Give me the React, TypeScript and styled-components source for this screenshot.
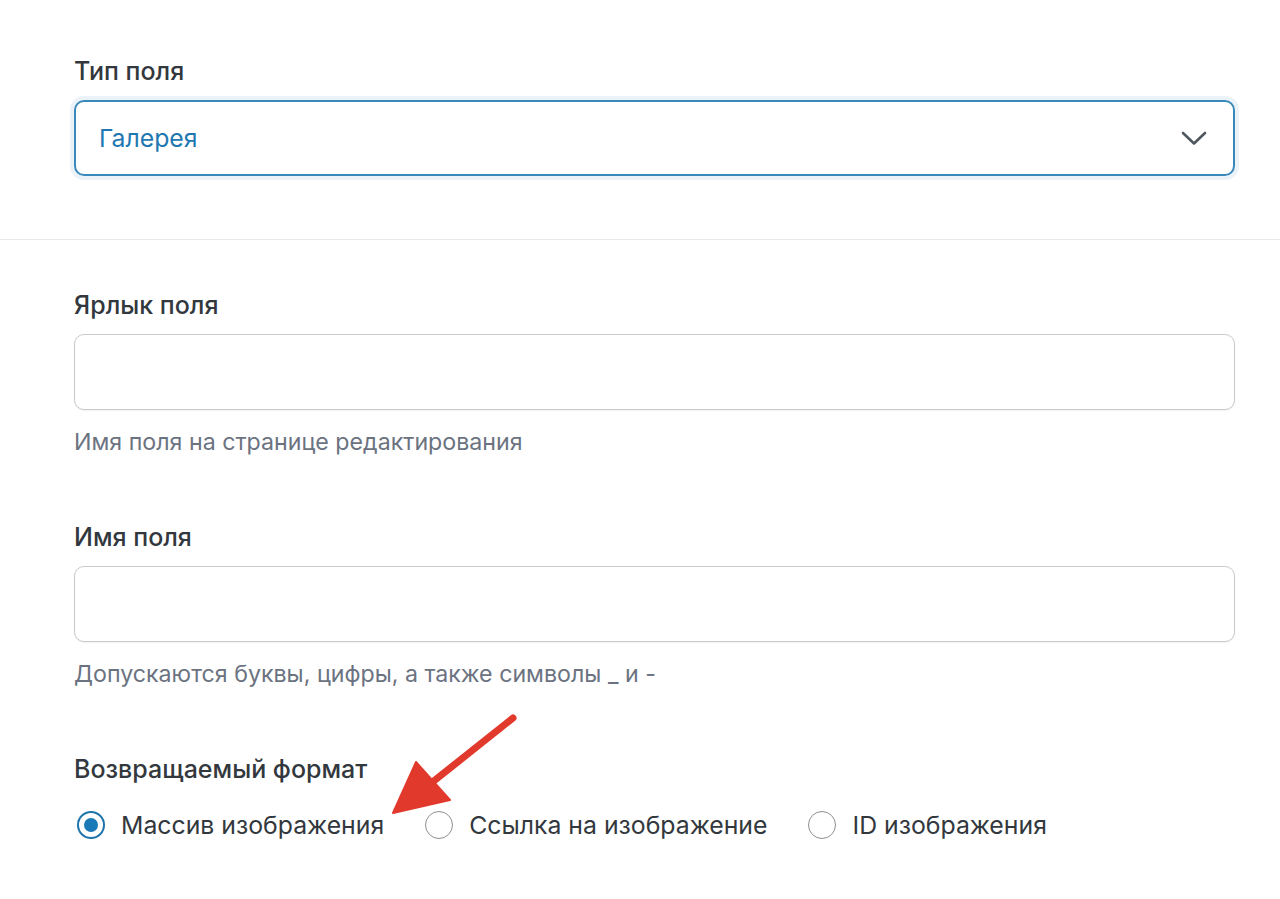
import React from "react";
import styled, { createGlobalStyle } from "styled-components";

const Global = createGlobalStyle`
  html, body { margin: 0; padding: 0; background: #ffffff; }
  body { font-family: Inter, "Noto Sans", sans-serif; -webkit-font-smoothing: antialiased; }
`;

const Page = styled.div`
  position: relative;
  width: 1280px;
  height: 899px;
  overflow: hidden;
  background: #fff;
`;

const Section = styled.section<{ $top: number; $bottom: number; $divider?: boolean }>`
  padding: ${(p) => p.$top}px 45px ${(p) => p.$bottom}px 74px;
  border-bottom: ${(p) => (p.$divider ? "1.5px solid #e9e9ea" : "none")};
  display: flex;
  flex-direction: column;
  gap: 67px;
`;

const Field = styled.div`
  display: flex;
  flex-direction: column;
`;

const Label = styled.div`
  font-size: 25px;
  line-height: 28px;
  font-weight: 500;
  color: #32383d;
  margin-bottom: 15px;
`;

const SelectBox = styled.div`
  height: 76px;
  box-sizing: border-box;
  border: 2px solid #3a89bb;
  border-radius: 10px;
  box-shadow: 0 0 0 4px rgba(34, 113, 177, 0.09);
  display: flex;
  align-items: center;
  justify-content: space-between;
  padding: 0 26px 0 23px;
  font-size: 24.8px;
  color: #1f78b1;
`;

const TextInput = styled.div`
  height: 76px;
  box-sizing: border-box;
  border: 1.5px solid #c9cacd;
  border-radius: 10px;
  box-shadow: 0 1px 2px rgba(0, 0, 0, 0.06);
  background: #fff;
`;

const Hint = styled.div`
  margin-top: 18px;
  font-size: 23.2px;
  line-height: 28px;
  color: #6b7381;
`;

const RadioRow = styled.div`
  display: flex;
  align-items: center;
  gap: 41px;
  margin-top: 11px;
  padding-left: 3px;
`;

const RadioItem = styled.label`
  display: flex;
  align-items: center;
  gap: 16px;
  font-size: 24.8px;
  line-height: 32px;
  color: #32383d;
`;

const RadioCircle = styled.span<{ $checked?: boolean }>`
  width: 28px;
  height: 28px;
  flex: none;
  box-sizing: border-box;
  border-radius: 50%;
  border: ${(p) => (p.$checked ? "2px solid #1e74ab" : "1.5px solid #8c8f94")};
  display: flex;
  align-items: center;
  justify-content: center;
  &::after {
    content: "";
    display: ${(p) => (p.$checked ? "block" : "none")};
    width: 14px;
    height: 14px;
    border-radius: 50%;
    background: #1a7ab7;
  }
`;

const ArrowOverlay = styled.svg`
  position: absolute;
  left: 0;
  top: 0;
  pointer-events: none;
`;

const Chevron = () => (
  <svg width="26" height="16" viewBox="0 0 26 16">
    <polyline points="2,3 13,13.5 24,3" fill="none" stroke="#50575e" strokeWidth="2.6" strokeLinecap="round" strokeLinejoin="round" />
  </svg>
);

export default function App() {
  return (
    <Page>
      <Global />
      <Section $top={57} $bottom={63} $divider>
        <Field>
          <Label>Тип поля</Label>
          <SelectBox>
            <span>Галерея</span>
            <Chevron />
          </SelectBox>
        </Field>
      </Section>
      <Section $top={51} $bottom={0}>
        <Field>
          <Label>Ярлык поля</Label>
          <TextInput />
          <Hint>Имя поля на странице редактирования</Hint>
        </Field>
        <Field>
          <Label>Имя поля</Label>
          <TextInput />
          <Hint>Допускаются буквы, цифры, а также символы _ и -</Hint>
        </Field>
        <Field>
          <Label>Возвращаемый формат</Label>
          <RadioRow>
            <RadioItem>
              <RadioCircle $checked />
              Массив изображения
            </RadioItem>
            <RadioItem>
              <RadioCircle />
              Ссылка на изображение
            </RadioItem>
            <RadioItem>
              <RadioCircle />
              ID изображения
            </RadioItem>
          </RadioRow>
        </Field>
      </Section>
      <ArrowOverlay width="1280" height="899" viewBox="0 0 1280 899">
        <line x1="513" y1="718" x2="425" y2="788" stroke="#e2392d" strokeWidth="7" strokeLinecap="round" />
        <polygon points="393,813 416,762 450,800" fill="#e2392d" stroke="#e2392d" strokeWidth="2" strokeLinejoin="round" />
      </ArrowOverlay>
    </Page>
  );
}
